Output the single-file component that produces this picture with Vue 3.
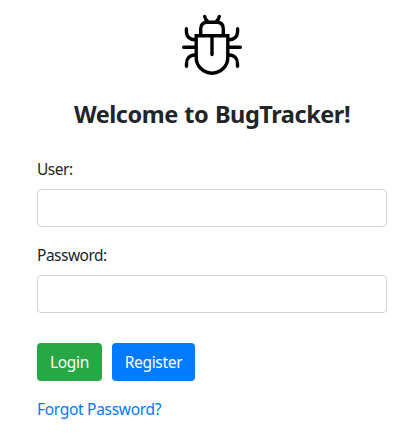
<script setup>
import { ref } from 'vue'

const user = ref('')
const password = ref('')
</script>

<template>
  <main class="page">
    <svg class="logo" viewBox="0 0 62 62" fill="none" stroke="#000" stroke-width="3.4" stroke-linecap="round" stroke-linejoin="round">
      <path d="M23.7 2.4Q24 5 26.2 6.8M38.3 2.4Q38 5 35.8 6.8" />
      <path d="M19.7 21V15Q19.7 8.3 26.4 8.3H35.6Q42.3 8.3 42.3 15V21" />
      <path stroke-linejoin="miter" d="M15.2 21.7H46.8V43.4A15.8 15.8 0 0 1 15.2 43.4Z" />
      <path d="M31 22V40.6" />
      <path d="M5.4 14.7V17.5C5.4 22.5 8.5 25.7 14 25.7M56.6 14.7V17.5C56.6 22.5 53.5 25.7 48 25.7" />
      <path d="M2.7 33.3H14M59.3 33.3H48" />
      <path d="M14 41C8.5 41 5.5 44.5 5.5 49.5V52.2M48 41C53.5 41 56.5 44.5 56.5 49.5V52.2" />
    </svg>
    <h1 class="title">Welcome to BugTracker!</h1>
    <form class="form" @submit.prevent>
      <div class="group">
        <label class="label" for="user">User:</label>
        <input id="user" v-model="user" class="input" type="text" />
      </div>
      <div class="group">
        <label class="label" for="password">Password:</label>
        <input id="password" v-model="password" class="input" type="password" />
      </div>
      <div class="actions">
        <button class="btn login" type="submit">Login</button>
        <button class="btn register" type="button">Register</button>
      </div>
      <a class="forgot" href="#">Forgot Password?</a>
    </form>
  </main>
</template>

<style>
body {
  margin: 0;
  background: #fff;
}
</style>

<style scoped>
.page {
  box-sizing: border-box;
  width: 408px;
  height: 446px;
  padding: 14px 21px 0 37px;
  display: flex;
  flex-direction: column;
  align-items: center;
  font-family: "Noto Sans", "Open Sans", sans-serif;
  font-size: 15.5px;
  line-height: 24px;
  color: #212529;
}
.logo {
  width: 62px;
  height: 62px;
  flex: none;
}
.title {
  margin: 24px 0 0;
  font-size: 23.5px;
  line-height: 29px;
  font-weight: 700;
  white-space: nowrap;
  letter-spacing: -0.45px;
  word-spacing: 0.9px;
}
.form {
  width: 350px;
  margin-top: 28px;
  display: flex;
  flex-direction: column;
}
.group {
  display: flex;
  flex-direction: column;
  gap: 8px;
  margin-bottom: 16px;
}
.label {
  height: 24px;
  letter-spacing: -0.5px;
}
.input {
  box-sizing: border-box;
  width: 350px;
  height: 38px;
  margin: 0;
  padding: 6px 12px;
  border: 1px solid #ced4da;
  border-radius: 4px;
  background: #fff;
  font: inherit;
  color: #495057;
  outline: none;
}
.actions {
  display: flex;
  gap: 10px;
  margin-top: 14px;
}
.btn {
  height: 38px;
  padding: 0;
  border: 0;
  border-radius: 4px;
  font: inherit;
  letter-spacing: -0.3px;
  color: #fff;
}
.login {
  width: 65px;
  background: #28a745;
}
.register {
  width: 83px;
  background: #007bff;
}
.forgot {
  align-self: flex-start;
  margin-top: 16px;
  color: #007bff;
  text-decoration: none;
  letter-spacing: -0.3px;
}
</style>
